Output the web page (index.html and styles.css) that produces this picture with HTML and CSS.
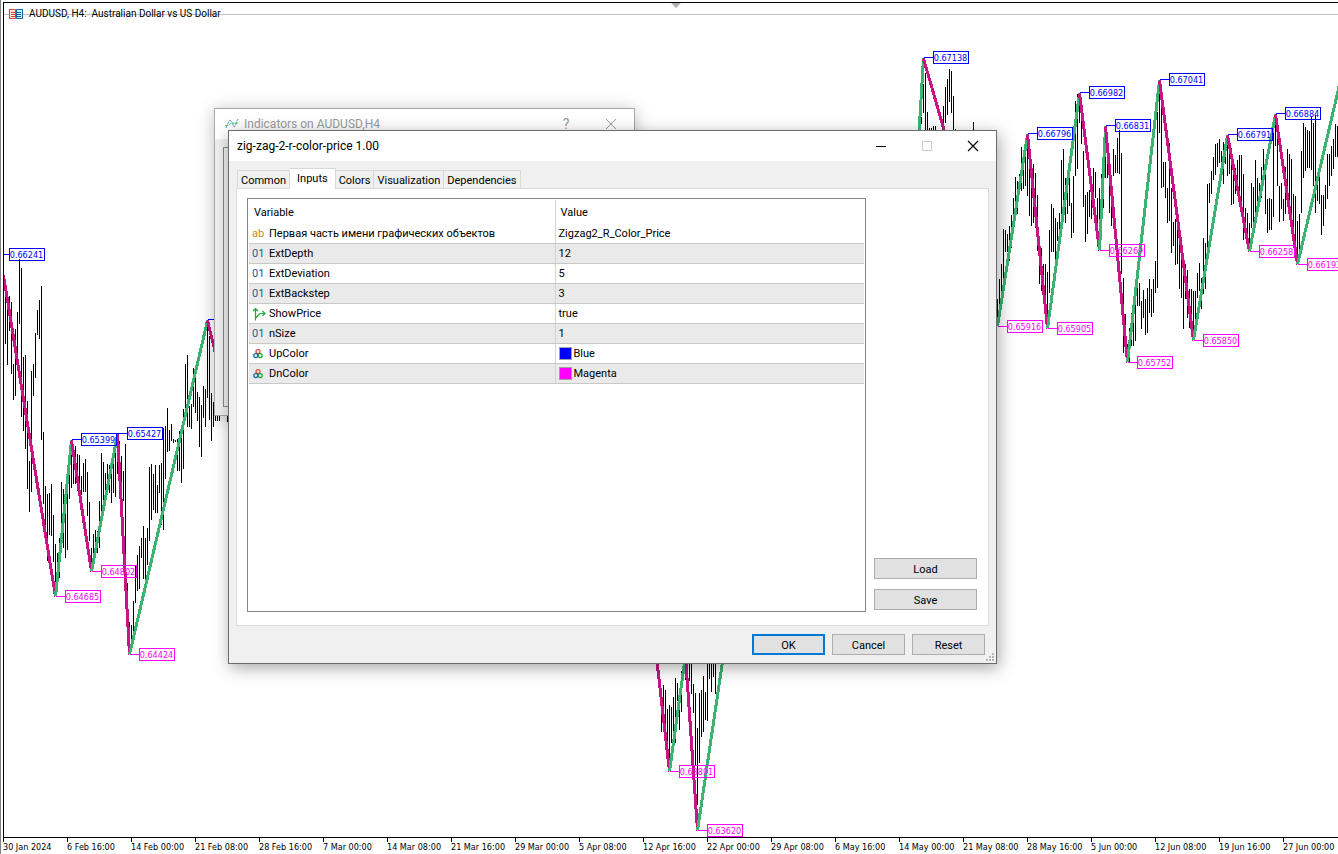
FILE: index.html
```
<!DOCTYPE html>
<html lang="en">
<head>
    <meta charset="UTF-8">
    <meta name="viewport" content="width=device-width, initial-scale=1.0">
    <title>AUDUSD, H4</title>
    <link rel="stylesheet" href="styles.css">
</head>
<body>
    <main class="chart">
        <svg class="plot" id="plot" aria-label="AUDUSD H4 price chart">
            <path class="bars" id="bars"/>
            <g class="zigzag" id="zigzag"></g>
            <g class="prices" id="prices"></g>
        </svg>
        <div class="chart-title">
            <svg width="16" height="12" viewBox="0 0 16 12">
                <path d="M1.500 1.500h6v9h-6z" fill="#fde8e6" stroke="#e03a34"/>
                <path d="M8.500 1.500h6v9h-6z" fill="#d4effc" stroke="#0a5fa5"/>
                <path d="M3 4.500h4M3 6.500h4M3 8.500h4" stroke="#e03a34"/>
                <path d="M9 4.500h4M9 6.500h4M9 8.500h4" stroke="#0a5fa5"/>
            </svg>
            <h1>AUDUSD, H4:&nbsp; Australian Dollar vs US Dollar</h1>
        </div>
        <div class="shift-mark"></div>
    </main>

    <footer class="time-axis" id="timeAxis"></footer>

    <section class="window indicators">
        <header class="title-bar">
            <svg width="14" height="12" viewBox="0 0 14 12" fill="none">
                <path d="M1 10L4 3Q5 1 6.500 4T9 9Q10 9 11 5L13 1" stroke="#4b93c4" stroke-dasharray="3 1"/>
                <path d="M0 7.500h4L6 5h3l2 1 3-2" stroke="#42c765" stroke-dasharray="3 1"/>
            </svg>
            <h2>Indicators on AUDUSD,H4</h2>
            <button class="caption-button" type="button" aria-label="Help">?</button>
            <button class="caption-button" type="button" aria-label="Close">
                <svg width="12" height="12" viewBox="0 0 12 12"><path d="M1 1l10 10M11 1L1 11" stroke="#999"/></svg>
            </button>
        </header>
        <div class="indicators-body"><div class="indicators-list"></div></div>
    </section>

    <section class="window properties">
        <header class="title-bar">
            <h2>zig-zag-2-r-color-price 1.00</h2>
            <button class="caption-button" type="button" aria-label="Minimize">
                <svg width="12" height="12" viewBox="0 0 12 12"><path d="M1 6.500h10" stroke="#000"/></svg>
            </button>
            <button class="caption-button" type="button" aria-label="Maximize" disabled>
                <svg width="12" height="12" viewBox="0 0 12 12"><path d="M1.500 1.500h9v9h-9z" fill="none" stroke="#ccc"/></svg>
            </button>
            <button class="caption-button" type="button" aria-label="Close">
                <svg width="12" height="12" viewBox="0 0 12 12"><path d="M1 1l10 10M11 1L1 11" stroke="#000" stroke-width="1.200"/></svg>
            </button>
        </header>

        <div class="content">
            <nav class="tabs" role="tablist">
                <button class="tab" type="button" role="tab">Common</button>
                <button class="tab active" type="button" role="tab" aria-selected="true">Inputs</button>
                <button class="tab" type="button" role="tab">Colors</button>
                <button class="tab" type="button" role="tab">Visualization</button>
                <button class="tab" type="button" role="tab">Dependencies</button>
            </nav>

            <div class="tab-panel" role="tabpanel">
                <div class="grid">
                    <table>
                        <thead>
                            <tr><th>Variable</th><th>Value</th></tr>
                        </thead>
                        <tbody>
                            <tr><td><span class="type text">ab</span>Первая часть имени графических объектов</td><td>Zigzag2_R_Color_Price</td></tr>
                            <tr><td><span class="type number">01</span>ExtDepth</td><td>12</td></tr>
                            <tr><td><span class="type number">01</span>ExtDeviation</td><td>5</td></tr>
                            <tr><td><span class="type number">01</span>ExtBackstep</td><td>3</td></tr>
                            <tr>
                                <td><span class="type"><svg width="14" height="14" viewBox="0 0 14 14" fill="none" stroke="#18b035" stroke-width="1.200"><path d="M3.500 13.500V1.500M1 4l2.500-2.500L6 4M3.500 11L8 6.500h5M10.500 4L13 6.500 10.500 9"/></svg></span>ShowPrice</td>
                                <td>true</td>
                            </tr>
                            <tr><td><span class="type number">01</span>nSize</td><td>1</td></tr>
                            <tr>
                                <td><span class="type"><svg width="12" height="14" viewBox="0 -1 12 14" fill="none" stroke-width="1.300"><circle cx="6" cy="3.600" r="2" stroke="#e0483e"/><circle cx="3.800" cy="7.600" r="2" stroke="#1667ad"/><circle cx="8.200" cy="7.600" r="2" stroke="#1aa63a"/></svg></span>UpColor</td>
                                <td><span class="swatch blue"></span>Blue</td>
                            </tr>
                            <tr>
                                <td><span class="type"><svg width="12" height="14" viewBox="0 -1 12 14" fill="none" stroke-width="1.300"><circle cx="6" cy="3.600" r="2" stroke="#e0483e"/><circle cx="3.800" cy="7.600" r="2" stroke="#1667ad"/><circle cx="8.200" cy="7.600" r="2" stroke="#1aa63a"/></svg></span>DnColor</td>
                                <td><span class="swatch magenta"></span>Magenta</td>
                            </tr>
                        </tbody>
                    </table>
                </div>
                <div class="side-buttons">
                    <button class="button" type="button">Load</button>
                    <button class="button" type="button">Save</button>
                </div>
            </div>

            <div class="actions">
                <button class="button default" type="submit">OK</button>
                <button class="button" type="button">Cancel</button>
                <button class="button" type="button">Reset</button>
            </div>
        </div>
        <svg class="grip" width="8" height="8" viewBox="0 0 8 8" fill="#b8b8b8"><path d="M6 0h2v2H6zM3 3h2v2H3zM6 3h2v2H6zM0 6h2v2H0zM3 6h2v2H3zM6 6h2v2H6z"/></svg>
    </section>

    <script src="chart.js"></script>
</body>
</html>
```
FILE: styles.css
```
:root {
    --up-color: #3cb371;
    --down-color: #c71585;
    --high-color: #0000ff;
    --low-color: #ff00ff;
    --window-color: #f0f0f0;
    --ui-font: Roboto, "Noto Sans", sans-serif;
    --chart-font: "DejaVu Sans Condensed", "DejaVu Sans", sans-serif;
}

* {
    margin: 0;
    padding: 0;
    box-sizing: border-box;
}

body {
    font-family: var(--ui-font);
    font-size: 11px;
    line-height: 14px;
    color: #000;
    background-color: #fff;
    display: flex;
    flex-direction: column;
    height: 100vh;
    overflow: hidden;
    position: relative;
    border-left: 1px solid #808080;
    padding: 2px 0 0 2px;
}

h1, h2 {
    font-weight: normal;
}

/* Chart */
.chart {
    flex: 1;
    min-height: 0;
    position: relative;
    border: solid #000;
    border-width: 1px 0 1px 1px;
}

.plot {
    display: block;
    width: 100%;
    height: 100%;
}

.bars {
    fill: none;
    stroke: #000;
    shape-rendering: crispEdges;
}

.zigzag line {
    stroke-width: 3px;
    shape-rendering: crispEdges;
}

.zigzag .up {
    stroke: var(--up-color);
}

.zigzag .down {
    stroke: var(--down-color);
}

.prices path {
    fill: none;
    shape-rendering: crispEdges;
}

.prices text {
    font-family: var(--chart-font);
    font-size: 9px;
    text-anchor: middle;
}

.prices .high path {
    stroke: var(--high-color);
}

.prices .high text {
    fill: var(--high-color);
}

.prices .low path {
    stroke: var(--low-color);
}

.prices .low text {
    fill: var(--low-color);
}

.chart-title {
    position: absolute;
    top: 4px;
    left: 0;
    right: 0;
    height: 14px;
    display: flex;
    align-items: center;
    gap: 5px;
    padding-left: 4px;
    background: linear-gradient(#c0c0c0, #c0c0c0) 0 7px / 100% 1px no-repeat;
}

.chart-title h1 {
    font-size: 10px;
}

.shift-mark {
    position: absolute;
    top: 0;
    left: 50%;
    border: solid transparent;
    border-width: 5px 5px 0;
    border-top-color: #b0b0b0;
}

.time-axis {
    display: flex;
    height: 16px;
    font-family: var(--chart-font);
    font-size: 9px;
    white-space: nowrap;
    overflow: hidden;
}

.time-axis span {
    flex: 0 0 64px;
    padding-top: 2px;
    background: linear-gradient(#000, #000) 0 0 / 1px 4px no-repeat;
}

/* Windows */
.window {
    position: absolute;
    border: 1px solid #6b6b6b;
    background-color: var(--window-color);
    display: flex;
    flex-direction: column;
}

.title-bar {
    height: 30px;
    display: flex;
    align-items: center;
    background-color: #fff;
}

.title-bar h2 {
    flex: 1;
    font-size: 12px;
}

.caption-button {
    width: 46px;
    height: 30px;
    border: none;
    background: none;
    display: flex;
    align-items: center;
    justify-content: center;
    font-family: var(--ui-font);
    font-size: 14px;
}

.indicators {
    top: 108px;
    left: 213px;
    width: 421px;
    border-color: #a8a8a8;
    box-shadow: 0 2px 16px rgba(0, 0, 0, 0.25);
}

.indicators .title-bar {
    padding: 0 3px 0 10px;
    gap: 5px;
    color: #999;
}

.indicators .title-bar .caption-button {
    width: 40px;
    color: #999;
}

.indicators-body {
    padding: 8px;
}

.indicators-list {
    height: 260px;
    border: 1px solid #828790;
}

.properties {
    top: 130px;
    left: 227px;
    width: 769px;
    box-shadow: 2px 4px 16px rgba(0, 0, 0, 0.35);
}

.properties .title-bar {
    padding-left: 8px;
}

.content {
    padding: 7px 7px 8px;
}

.tabs {
    display: flex;
    align-items: flex-end;
    height: 20px;
    padding-left: 1px;
}

.tab {
    height: 18px;
    padding: 2px 3px 0;
    border: 1px solid #d9d9d9;
    border-width: 1px 1px 0 0;
    background-color: var(--window-color);
    font-family: var(--ui-font);
    font-size: 11px;
    line-height: 14px;
}

.tab:first-child {
    border-left-width: 1px;
}

.tab.active {
    position: relative;
    height: 21px;
    margin-bottom: -1px;
    padding: 0 7px;
    background-color: #fff;
}

.tab-panel {
    display: flex;
    justify-content: space-between;
    border: 1px solid #dcdcdc;
    background-color: #fff;
    padding: 9px 11px 13px 10px;
}

.grid {
    width: 619px;
    height: 414px;
    border: 1px solid #828790;
    padding: 1px;
}

table {
    width: 100%;
    border-collapse: collapse;
    table-layout: fixed;
}

th, td {
    text-align: left;
    font-weight: normal;
    white-space: nowrap;
    padding: 2px 3px 0;
}

th {
    height: 23px;
    padding: 3px 5px 0;
}

th:first-child, td:first-child {
    width: 306px;
    border-right: 1px solid #d5d5d5;
}

td {
    height: 20px;
    border-bottom: 1px solid #c8c8c8;
}

tbody tr:nth-child(even) {
    background-color: #eaeaea;
}

.type {
    display: inline-block;
    width: 16px;
    height: 14px;
    vertical-align: top;
    margin-right: 1px;
}

.type svg {
    display: block;
}

.type.text {
    color: #c48a2c;
}

.type.number {
    color: #1464a0;
    font-size: 11px;
}

.swatch {
    display: inline-block;
    width: 13px;
    height: 13px;
    border: 1px solid #a0a0a0;
    vertical-align: top;
    margin-right: 2px;
}

.swatch.blue {
    background-color: #0000ff;
}

.swatch.magenta {
    background-color: #ff00ff;
}

.side-buttons {
    width: 103px;
    display: flex;
    flex-direction: column;
    justify-content: flex-end;
    gap: 10px;
    padding-bottom: 2px;
}

.button {
    height: 21px;
    padding-top: 2px;
    border: 1px solid #adadad;
    background-color: #e1e1e1;
    font-family: var(--ui-font);
    font-size: 11px;
    line-height: 14px;
}

.button.default {
    border: 2px solid #0078d7;
}

.actions {
    display: flex;
    justify-content: flex-end;
    gap: 7px;
    padding: 8px 4px 0 0;
}

.actions .button {
    width: 73px;
}

.grip {
    position: absolute;
    right: 2px;
    bottom: 2px;
}
```
FILE: chart.js
```
// One bar every 2px: start x, then [high, low] pairs
const runs = [
    [5, [[280,343],[293,364],[295,330],[301,373],[363,399],[328,395],[311,357],[258,323],[267,416],[356,430],
        [354,448],[400,488],[460,511],[370,491],[363,395],[332,377],[309,334],[299,338],[285,439],[431,503],
        [485,540],[493,560],[492,534],[483,535],[514,561],[543,590],[552,583],[537,577],[481,545],[488,547],
        [492,557],[477,549],[463,498],[440,487],[443,483],[445,483],[453,490],[454,497],[475,494],[462,491],
        [458,491],[471,515],[501,540],[547,570],[533,563],[529,553],[530,552],[500,547],[452,517],[461,513],
        [472,498],[463,492],[464,492],[467,502],[457,492],[447,496],[432,473],[440,477],[455,488],[470,500],
        [443,580],[582,630],[621,652],[624,643],[600,630],[565,602],[554,590],[545,588],[537,557],[525,578],
        [537,578],[527,564],[466,540],[463,519],[473,509],[464,512],[484,512],[464,492],[462,524],[427,529],
        [425,478],[407,451],[429,450],[423,440],[438,442],[439,441],[438,470],[430,470],[430,482],[408,468],
        [363,420],[354,426],[405,426],[403,428],[367,406],[375,412],[391,420],[396,446],[404,456],[385,417],
        [388,426],[320,397],[335,419],[392,440],[401,426],[415,420],[415,420],[415,420]]],
    [227, [[415,421]]],
    [659, [[683,696],[693,731],[684,717],[689,727],[708,747],[704,757],[706,742],[696,730],[677,742],[682,700],
        [693,729],[670,711],[660,678],[660,679],[660,677],[660,680],[660,693],[683,712],[692,765],[727,804],
        [692,762],[689,736],[675,731],[691,719],[660,720],[660,678],[660,691],[660,676],[660,693]]],
    [921, [[116,123],[83,112],[72,135],[111,135],[127,135],[127,135],[125,135],[125,135]]],
    [943, [[105,125],[86,122],[78,114],[68,101],[70,112],[95,135],[128,135]]],
    [973, [[121,135]]],
    [997, [[298,323],[278,312],[263,300],[228,292],[229,251],[233,251],[225,260],[214,247],[197,230],[176,207],
        [180,213],[173,187],[146,190],[157,188],[148,185],[143,195],[152,215],[185,225],[163,222],[172,227],
        [194,250],[240,283],[247,290],[263,297],[263,317],[271,325],[229,292],[203,251],[207,251],[217,260],
        [221,240],[212,230],[159,222],[148,218],[177,222],[177,213],[175,205],[202,237],[175,232],[100,175],
        [93,168],[93,122],[105,143],[150,206],[194,241],[191,233],[189,216],[180,218],[167,212],[171,197],
        [197,227],[187,243],[173,227],[160,207],[137,177],[143,177],[165,212],[175,225],[148,175],[154,172],
        [137,172],[129,173],[152,273],[277,352],[313,353],[343,360],[327,362],[312,345],[312,345],[293,340],
        [282,305],[282,305],[300,328],[289,317],[298,334],[287,332],[278,312],[288,316],[278,312],[260,292],
        [111,287],[88,132],[107,187],[161,186],[161,197],[187,222],[142,220],[187,252],[221,245],[218,264],
        [227,263],[231,288],[243,297],[263,328],[263,298],[269,317],[288,327],[288,333],[290,337],[290,327],
        [272,297],[262,290],[277,308],[237,293],[242,288],[183,257],[182,202],[170,193],[156,179],[143,174],
        [142,166],[138,162],[150,162],[141,183],[140,163],[137,175],[142,173],[147,204],[163,203],[167,193],
        [159,192],[154,203],[154,203],[173,239],[207,237],[212,242],[222,247],[182,227],[186,225],[159,213],
        [177,212],[182,203],[166,197],[148,183],[173,213],[198,232],[197,229],[198,229],[132,216],[115,145],
        [123,185],[185,221],[182,208],[198,220],[166,213],[148,193],[153,218],[158,222],[193,233],[195,247],
        [220,260],[213,250],[150,212],[122,177],[126,170],[129,167],[130,167],[116,169],[122,185],[114,212],
        [172,200],[173,203],[194,234],[194,225],[184,208],[153,198],[153,185],[145,175],[138,168],[123,156],
        [125,156]]]
];

// Indicator legs; direction follows from the y values
const legs = [
    [[3,275],[55,596],[71,440],[91,571],[117,434],[129,654],[207,320],[235,435]],
    [[645,560],[669,771],[685,655],[697,830],[737,560]],
    [[915,190],[923,58],[958,180]],
    [[997,326],[1027,134],[1047,328],[1079,93],[1099,250],[1105,126],[1127,362],[1159,80],[1193,340],
        [1227,135],[1249,251],[1275,114],[1297,264],[1339,84]]
];

const highs = [
    [-1,254,'0.66241'],[71,439,'0.65399'],[117,433,'0.65427'],[207,319,'0.66041'],[923,57,'0.67138'],
    [1027,133,'0.66796'],[1079,92,'0.66982'],[1105,125,'0.66831'],[1159,79,'0.67041'],[1227,134,'0.66791'],
    [1275,113,'0.66884']
];

const lows = [
    [55,596,'0.64685'],[91,571,'0.64802'],[129,654,'0.64424'],[669,771,'0.63891'],[697,830,'0.63620'],
    [997,326,'0.65916'],[1047,328,'0.65905'],[1099,250,'0.66269'],[1127,362,'0.65752'],[1193,340,'0.65850'],
    [1249,251,'0.66258'],[1297,264,'0.66193']
];

const times = [
    '30 Jan 2024', '6 Feb 16:00', '14 Feb 00:00', '21 Feb 08:00', '28 Feb 16:00', '7 Mar 00:00', '14 Mar 08:00',
    '21 Mar 16:00', '29 Mar 00:00', '5 Apr 08:00', '12 Apr 16:00', '22 Apr 00:00', '29 Apr 08:00', '6 May 16:00',
    '14 May 00:00', '21 May 08:00', '28 May 16:00', '5 Jun 00:00', '12 Jun 08:00', '19 Jun 16:00', '27 Jun 00:00'
];

const plot = document.getElementById('plot');

// Data is in window coordinates, shift it by the chart frame
const frame = plot.getBoundingClientRect();
const dx = 0.5 - frame.left;
const dy = 0.5 - frame.top;
for (const group of plot.children) {
    group.setAttribute('transform', `translate(${dx} ${dy})`);
}

let path = '';
runs.forEach(([start, bars]) => {
    bars.forEach(([high, low], i) => {
        path += `M${start + i * 2} ${high}V${low}`;
    });
});
document.getElementById('bars').setAttribute('d', path);

let lines = '';
legs.forEach(points => {
    for (let i = 1; i < points.length; i++) {
        const [x1, y1] = points[i - 1];
        const [x2, y2] = points[i];
        lines += `<line class="${y2 < y1 ? 'up' : 'down'}" x1="${x1}" y1="${y1}" x2="${x2}" y2="${y2}"/>`;
    }
});
document.getElementById('zigzag').innerHTML = lines;

function priceLabel([x, y, text], type) {
    return `<g class="${type}">
        <path d="M${x} ${y}h10M${x + 10} ${y - 6}h35v12h-35z"/>
        <text x="${x + 27}" y="${y + 3}">${text}</text>
    </g>`;
}

document.getElementById('prices').innerHTML =
    highs.map(p => priceLabel(p, 'high')).join('') + lows.map(p => priceLabel(p, 'low')).join('');

document.getElementById('timeAxis').innerHTML = times.map(t => `<span>${t}</span>`).join('');
```
